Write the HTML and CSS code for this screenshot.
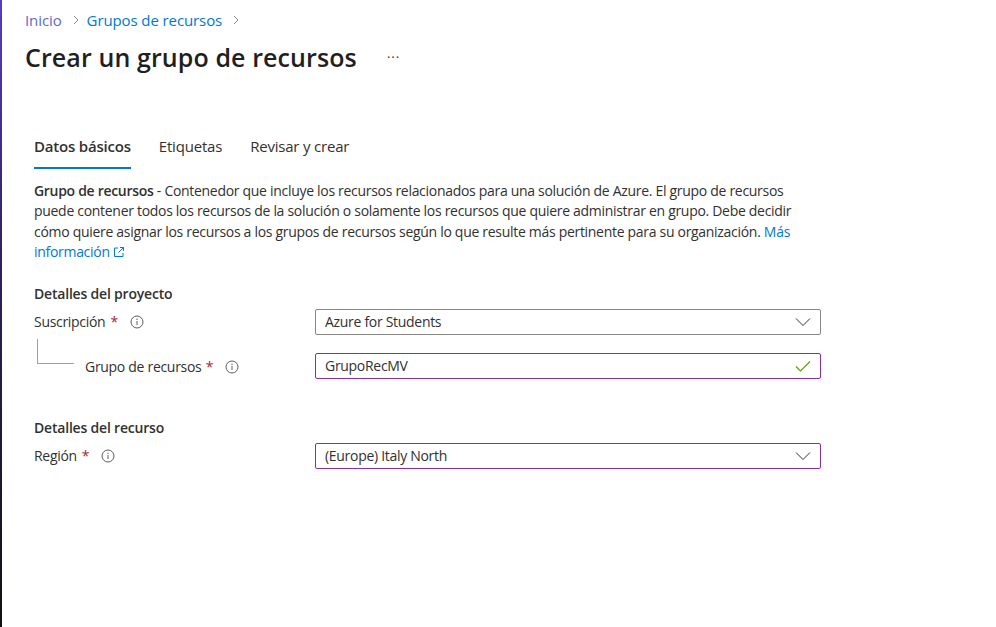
FILE: index.html
```html
<!DOCTYPE html>
<html lang="es">
<head>
<meta charset="utf-8">
<title>Crear un grupo de recursos</title>
<link rel="stylesheet" href="styles.css">
</head>
<body>
<div class="frame">
  <div class="edge"></div>
  <main class="page">
    <nav class="breadcrumb">
      <a class="crumb visited" href="#">Inicio</a>
      <svg class="chev" width="8" height="10" viewBox="0 0 8 10"><path d="M2 1l4 4-4 4" fill="none" stroke="#8a8886" stroke-width="1"/></svg>
      <a class="crumb" href="#">Grupos de recursos</a>
      <svg class="chev" width="8" height="10" viewBox="0 0 8 10"><path d="M2 1l4 4-4 4" fill="none" stroke="#8a8886" stroke-width="1"/></svg>
    </nav>
    <header class="title-row">
      <h1 class="title">Crear un grupo de recursos</h1>
      <span class="more">···</span>
    </header>

    <section class="content">
      <div class="tabs">
        <span class="tab active">Datos básicos</span>
        <span class="tab">Etiquetas</span>
        <span class="tab">Revisar y crear</span>
      </div>

      <p class="desc"><strong>Grupo de recursos</strong> - Contenedor que incluye los recursos relacionados para una solución de Azure. El grupo de recursos puede contener todos los recursos de la solución o solamente los recursos que quiere administrar en grupo. Debe decidir cómo quiere asignar los recursos a los grupos de recursos según lo que resulte más pertinente para su organización. <a class="link" href="#">Más información<svg class="ext" width="12" height="12" viewBox="0 0 12 12"><path d="M5 2H1.5v8.5H10V7" fill="none" stroke="#0078d4" stroke-width="1"/><path d="M7 1.5h3.5V5M10.5 1.5L5.5 6.5" fill="none" stroke="#0078d4" stroke-width="1"/></svg></a></p>

      <h2 class="section">Detalles del proyecto</h2>
      <div class="row">
        <label class="label">Suscripción <span class="req">*</span>
          <svg class="info" width="14" height="14" viewBox="0 0 14 14"><circle cx="7" cy="7" r="6" fill="none" stroke="#605e5c" stroke-width="1"/><path d="M7 6v4" stroke="#605e5c" stroke-width="1"/><circle cx="7" cy="4.2" r="0.7" fill="#605e5c"/></svg>
        </label>
        <div class="field">
          <span class="value">Azure for Students</span>
          <svg class="caret" width="16" height="10" viewBox="0 0 16 10"><path d="M1 1.5l7 7 7-7" fill="none" stroke="#323130" stroke-width="1"/></svg>
        </div>
      </div>
      <div class="row nested">
        <div class="label sub">
          <span class="tree"></span>
          <span class="sub-text">Grupo de recursos <span class="req">*</span></span>
          <svg class="info" width="14" height="14" viewBox="0 0 14 14"><circle cx="7" cy="7" r="6" fill="none" stroke="#605e5c" stroke-width="1"/><path d="M7 6v4" stroke="#605e5c" stroke-width="1"/><circle cx="7" cy="4.2" r="0.7" fill="#605e5c"/></svg>
        </div>
        <div class="field focus">
          <span class="value">GrupoRecMV</span>
          <svg class="check" width="16" height="12" viewBox="0 0 16 12"><path d="M1 6.5l4.5 4.5L15 1.5" fill="none" stroke="#57a300" stroke-width="1.2"/></svg>
        </div>
      </div>

      <h2 class="section second">Detalles del recurso</h2>
      <div class="row">
        <label class="label">Región <span class="req">*</span>
          <svg class="info" width="14" height="14" viewBox="0 0 14 14"><circle cx="7" cy="7" r="6" fill="none" stroke="#605e5c" stroke-width="1"/><path d="M7 6v4" stroke="#605e5c" stroke-width="1"/><circle cx="7" cy="4.2" r="0.7" fill="#605e5c"/></svg>
        </label>
        <div class="field focus">
          <span class="value">(Europe) Italy North</span>
          <svg class="caret" width="16" height="10" viewBox="0 0 16 10"><path d="M1 1.5l7 7 7-7" fill="none" stroke="#323130" stroke-width="1"/></svg>
        </div>
      </div>
    </section>
  </main>
</div>
</body>
</html>
```
FILE: styles.css
```css
* { box-sizing: border-box; }
html, body { margin: 0; padding: 0; height: 100%; }
body {
  font-family: "Open Sans", "Noto Sans", sans-serif;
  font-size: 14px;
  color: #323130;
  background: #fff;
}
.frame { display: flex; height: 627px; }
.edge {
  width: 2px;
  flex: none;
  background: linear-gradient(#5040c0, #2a2460 40%, #111 100%);
}
.page { flex: 1; padding: 9px 0 0 23px; }
.breadcrumb { display: flex; align-items: center; height: 22px; }
.crumb { color: #0078d4; text-decoration: none; font-size: 15px; letter-spacing: -0.1px; }
.crumb.visited { color: #5c6bd0; }
.chev { margin: 0 7px 0 10px; }
.title-row { display: flex; align-items: center; margin-top: 6px; height: 40px; }
.title { margin: 0; font-size: 25px; font-weight: 600; color: #1f1f1f; letter-spacing: 0.1px; }
.more { margin-left: 30px; font-size: 13px; color: #323130; letter-spacing: 1px; }

.content { padding: 0 0 0 9px; margin-top: 52px; }
.tabs { display: flex; gap: 28px; height: 40px; }
.tab { display: block; padding-top: 7px; height: 40px; font-size: 15px; color: #323130; letter-spacing: -0.2px; }
.tab.active { font-weight: 600; border-bottom: 2px solid #0078d4; }

.desc { margin: 12px 0 0; width: 790px; line-height: 20.4px; font-size: 14px; letter-spacing: -0.3px; }
.desc strong { font-weight: 600; }
.link { color: #0078d4; text-decoration: none; }
.ext { margin-left: 3px; vertical-align: -1px; }

.section { margin: 21px 0 0; font-size: 14px; font-weight: 600; height: 20px; line-height: 20px; letter-spacing: -0.2px; }
.section.second { margin-top: 39px; }

.row { display: grid; grid-template-columns: 281px 506px; align-items: center; margin-top: 5px; }
.row.nested { margin-top: 18px; }
.label { display: flex; align-items: center; gap: 4px; height: 26px; letter-spacing: -0.3px; }
.req { color: #a4262c; margin-left: 1px; }
.info { margin-left: 8px; }
.label.sub { position: relative; padding-left: 51px; padding-top: 2px; }
.tree {
  position: absolute; left: 3px; top: -14px;
  width: 37px; height: 25px;
  border-left: 1px solid #a19f9d; border-bottom: 1px solid #a19f9d;
}
.sub-text { display: inline-block; }
.field {
  display: flex; align-items: center; justify-content: space-between;
  height: 26px; border: 1px solid #8a8886; border-radius: 2px;
  padding: 0 9px 0 9px;
  letter-spacing: -0.3px;
}
.field.focus { border-color: #8d2ea8; }
.value { color: #323130; }
.caret, .check { flex: none; }
```
